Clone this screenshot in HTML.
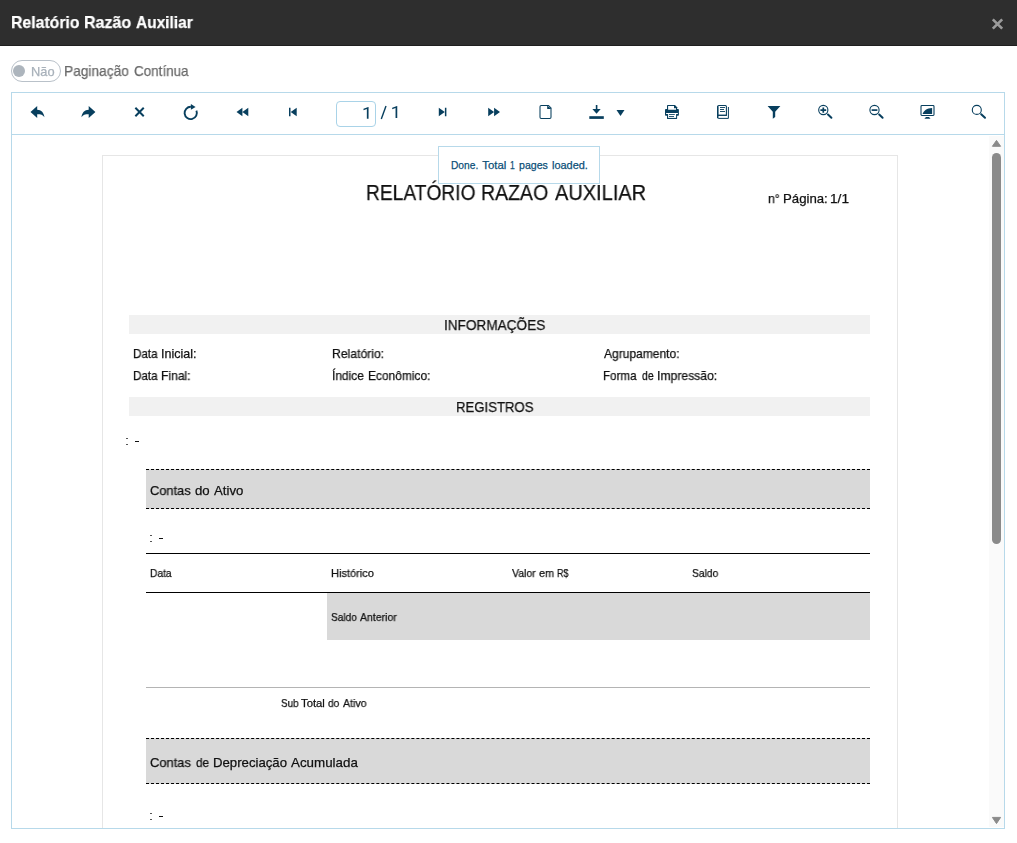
<!DOCTYPE html>
<html><head><meta charset="utf-8">
<style>
*{box-sizing:border-box;margin:0;padding:0}
html,body{width:1017px;height:843px;overflow:hidden;background:#fff;font-family:"Liberation Sans",sans-serif;}
body{position:relative}
.abs{position:absolute}
.t{position:absolute;white-space:nowrap;transform-origin:0 0;will-change:transform;-webkit-text-stroke:0.25px}
.t[id^=toast]{will-change:auto}
</style></head><body>
<div class="abs" style="left:0;top:0;width:1017px;height:46px;background:#2e2e2e;border-bottom:1px solid #1f1f1f"></div>
<svg class="abs" style="left:987px;top:14px" width="20" height="20" viewBox="987 14 20 20"><path d="M992.8 19.4 L1002.2 28.6 M1002.2 19.4 L992.8 28.6" stroke="#9b9b9b" stroke-width="2.7" fill="none"/></svg>
<div class="abs" style="left:11px;top:60px;width:50px;height:22px;border:1px solid #b9c1c9;border-radius:11px;background:#fff"></div>
<div class="abs" style="left:13.3px;top:65.2px;width:11.6px;height:11.6px;border-radius:6px;background:#adb5bd"></div>
<div class="abs" style="left:11px;top:92px;width:994px;height:43px;border:1px solid #b7d9ea;background:#fff"></div>
<div class="abs" style="left:11px;top:134px;width:994px;height:695px;border:1px solid #b7d9ea;background:#fff"></div>
<svg class="abs" style="left:0;top:92px" width="1017" height="43" viewBox="0 92 1017 43" fill="#083f5e" stroke="none">
<!-- back (reply) -->
<path d="M30.5 112 L37.2 106 L37.2 109.7 C41.3 109.9 44 112.6 44.4 117.2 C42.8 114.8 41 114.3 37.2 114.3 L37.2 117.9 Z"/>
<!-- forward -->
<path d="M95.4 112 L88.7 106 L88.7 109.7 C84.6 109.9 81.9 112.6 81.5 117.2 C83.1 114.8 84.9 114.3 88.7 114.3 L88.7 117.9 Z"/>
<!-- x -->
<path d="M135.35 107.8 L143.75 116.2 M143.75 107.8 L135.35 116.2" stroke="#083f5e" stroke-width="2" fill="none" stroke-linecap="butt"/>
<!-- refresh -->
<path d="M190.9 106.8 A6.15 6.15 0 1 0 196.4 110.55" stroke="#083f5e" stroke-width="1.9" fill="none"/>
<path d="M190.9 104.1 L195.6 106.9 L190.9 109.8 Z"/>
<!-- rewind -->
<path d="M236.5 112 L242.4 107.8 L242.4 116.2 Z M242.4 112 L248.3 107.8 L248.3 116.2 Z"/>
<!-- first -->
<path d="M289 107.8 H290.5 V116.2 H289 Z M290.7 112 L296.7 107.8 L296.7 116.2 Z"/>
<!-- last -->
<path d="M444.9 107.8 H446.4 V116.2 H444.9 Z M444.8 112 L438.8 107.8 L438.8 116.2 Z"/>
<!-- ffwd -->
<path d="M500 112 L494.1 107.8 L494.1 116.2 Z M494.1 112 L488.2 107.8 L488.2 116.2 Z"/>
<!-- file -->
<path d="M541.2 105.5 H548.5 L551 108 V117.2 Q551 118.4 549.8 118.4 H541.2 Q540 118.4 540 117.2 V106.7 Q540 105.5 541.2 105.5 Z" fill="none" stroke="#083f5e" stroke-width="1.05"/>
<path d="M547.2 105.5 L551.5 109 H547.2 Z"/>
<!-- download -->
<rect x="589.3" y="116.2" width="14.5" height="2.7"/>
<rect x="595.8" y="105" width="1.6" height="5"/>
<path d="M592.4 109 H600.7 L596.55 113.8 Z"/>
<path d="M616.5 110 H624.5 L620.5 115.9 Z"/>
<!-- printer -->
<rect x="665" y="109.1" width="13.9" height="6.7" rx="0.8"/>
<rect x="666.1" y="113" width="11.8" height="1" fill="#fff"/>
<rect x="667" y="114" width="10.1" height="4.9" rx="0.4"/>
<rect x="668.1" y="113" width="8" height="4.9" fill="#fff"/>
<rect x="669" y="114.1" width="5.8" height="0.85"/>
<rect x="669" y="116.1" width="5" height="0.85"/>
<path d="M667 110 V105.4 Q667 105 667.4 105 H675 L677.1 107.2 V110 Z"/>
<path d="M668.1 109.8 V106.1 H674 V108.2 H676 V109.8 Z" fill="#fff"/>
<!-- book -->
<path d="M718.8 105.55 H725.4 Q726.4 105.55 726.4 106.5 V115.3 H717.6 V106.8 Q717.6 105.55 718.8 105.55 Z" fill="none" stroke="#083f5e" stroke-width="1.1"/>
<path d="M717.75 106.2 V118" stroke="#083f5e" stroke-width="1.5" fill="none"/><rect x="717.5" y="114.8" width="9.4" height="1.05"/>
<path d="M717.5 115.3 V117.6 Q717.5 118.4 718.3 118.4 H728.4 V107" stroke="#083f5e" stroke-width="1" fill="none"/>
<rect x="720" y="107.1" width="5" height="0.9"/><rect x="720" y="109.1" width="4" height="0.9"/><rect x="720" y="111.1" width="5" height="0.9"/>
<!-- filter -->
<path d="M767.6 105.9 H780.4 L775.2 111.8 V116.9 L772.8 118.7 V111.8 Z"/>
<!-- zoom in -->
<circle cx="823.3" cy="110" r="4.6" fill="none" stroke="#083f5e" stroke-width="1.1"/>
<path d="M828 114.5 L831.4 117.7" stroke="#083f5e" stroke-width="2" fill="none" stroke-linecap="round"/>
<path d="M820.4 110.1 H826.2 M823.3 107.4 V112.8" stroke="#083f5e" stroke-width="1.7" fill="none"/>
<!-- zoom out -->
<circle cx="874.5" cy="110" r="4.6" fill="none" stroke="#083f5e" stroke-width="1.1"/>
<path d="M879.2 114.5 L882.6 117.7" stroke="#083f5e" stroke-width="2" fill="none" stroke-linecap="round"/>
<path d="M871.6 110.1 H877.4" stroke="#083f5e" stroke-width="1.7" fill="none"/>
<!-- monitor -->
<rect x="921" y="105.5" width="13" height="10" rx="0.9" fill="none" stroke="#083f5e" stroke-width="1.1"/>
<path d="M922.6 113.9 C923.6 110.8 927 108 932.1 108 V113.9 Z"/>
<path d="M924.4 118.7 L926 117 H929 L930.5 118.7 Z"/>
<!-- search -->
<circle cx="976.8" cy="109.9" r="4.5" fill="none" stroke="#083f5e" stroke-width="1.1"/>
<path d="M981.2 114.2 L985 117.8" stroke="#083f5e" stroke-width="2" fill="none" stroke-linecap="round"/>
</svg>
<div class="abs" style="left:336px;top:101px;width:40px;height:26px;border:1px solid #a9d3e8;border-radius:4px;background:#fff"></div>
<svg class="abs" style="left:356px;top:100px" width="50" height="26" viewBox="356 100 50 26" fill="#083f5e">
<path d="M368.55 107 V118.8 H366.85 V109.1 L363.5 110.35 V108.8 L368.25 107 Z"/>
<path d="M397.25 106 V117.9 H395.55 V108.1 L392.2 109.35 V107.8 L396.95 106 Z"/>
<path d="M381.3 119 L386 105.9" stroke="#083f5e" stroke-width="1.4" fill="none"/>
</svg>
<div class="abs" style="left:102px;top:155px;width:796px;height:673px;border:1px solid #e6e6e6;border-bottom:none;background:#fff"></div>
<div class="abs" style="left:129px;top:315px;width:741px;height:19px;background:#f1f1f1"></div>
<div class="abs" style="left:129px;top:397px;width:741px;height:19px;background:#f1f1f1"></div>
<div class="abs" style="left:126px;top:438px;width:2px;height:1px;background:#555"></div><div class="abs" style="left:126px;top:444px;width:2px;height:1px;background:#555"></div><div class="abs" style="left:135px;top:441px;width:4px;height:1px;background:#111"></div>
<div class="abs" style="left:146px;top:469px;width:724px;height:40px;background:#d9d9d9;border-top:1px dashed #000;border-bottom:1px dashed #000"></div>

<div class="abs" style="left:150px;top:535px;width:2px;height:1px;background:#555"></div><div class="abs" style="left:150px;top:541px;width:2px;height:1px;background:#555"></div><div class="abs" style="left:159px;top:538px;width:4px;height:1px;background:#111"></div>
<div class="abs" style="left:146px;top:553px;width:724px;height:1px;background:#000"></div>
<div class="abs" style="left:146px;top:592px;width:724px;height:1px;background:#000"></div>
<div class="abs" style="left:327px;top:593px;width:543px;height:47px;background:#d9d9d9"></div>
<div class="abs" style="left:146px;top:687px;width:724px;height:1px;background:#b4b4b4"></div>
<div class="abs" style="left:146px;top:738px;width:724px;height:46px;background:#d9d9d9;border-top:1px dashed #000;border-bottom:1px dashed #000"></div>

<div class="abs" style="left:150px;top:813px;width:2px;height:1px;background:#555"></div><div class="abs" style="left:150px;top:819px;width:2px;height:1px;background:#555"></div><div class="abs" style="left:159px;top:816px;width:4px;height:1px;background:#111"></div>
<div class="t" id="title0" style="left:11.39px;top:13.00px;font-size:17.0px;line-height:20px;transform:scaleX(0.9297);color:#fff;font-weight:bold;">Relatório</div>
<div class="t" id="title1" style="left:83.52px;top:13.00px;font-size:17.0px;line-height:20px;transform:scaleX(0.9412);color:#fff;font-weight:bold;">Razão</div>
<div class="t" id="title2" style="left:135.69px;top:13.00px;font-size:17.0px;line-height:20px;transform:scaleX(0.9104);color:#fff;font-weight:bold;">Auxiliar</div>
<div class="t" id="pag0" style="left:63.72px;top:61.00px;font-size:14.5px;line-height:20px;transform:scaleX(0.9464);color:#696969;">Paginação</div>
<div class="t" id="pag1" style="left:134.21px;top:61.00px;font-size:14.5px;line-height:20px;transform:scaleX(0.9262);color:#696969;">Contínua</div>
<div class="t" id="nao0" style="left:30.72px;top:62.00px;font-size:12.4px;line-height:20px;transform:scaleX(1.0343);color:#a8b1ba;">Não</div>
<div class="t" id="toast0" style="left:450.71px;top:155.00px;font-size:11.4px;line-height:20px;transform:scaleX(0.8961);color:#0b4f78;z-index:5;">Done.</div>
<div class="t" id="toast1" style="left:482.19px;top:155.00px;font-size:11.4px;line-height:20px;transform:scaleX(1.0000);color:#0b4f78;z-index:5;">Total</div>
<div class="t" id="toast2" style="left:510.00px;top:155.00px;font-size:11.4px;line-height:20px;transform:scaleX(0.7500);color:#0b4f78;z-index:5;">1</div>
<div class="t" id="toast3" style="left:518.50px;top:155.00px;font-size:11.4px;line-height:20px;transform:scaleX(0.9297);color:#0b4f78;z-index:5;">pages</div>
<div class="t" id="toast4" style="left:552.09px;top:155.00px;font-size:11.4px;line-height:20px;transform:scaleX(0.9611);color:#0b4f78;z-index:5;">loaded.</div>
<div class="t" id="rtitle0" style="left:366.10px;top:183.00px;font-size:21.8px;line-height:20px;transform:scaleX(0.8800);color:#111;">RELATÓRIO</div>
<div class="t" id="rtitle1" style="left:481.15px;top:183.00px;font-size:21.8px;line-height:20px;transform:scaleX(0.8944);color:#111;">RAZAO</div>
<div class="t" id="rtitle2" style="left:555.30px;top:183.00px;font-size:21.8px;line-height:20px;transform:scaleX(0.9180);color:#111;">AUXILIAR</div>
<div class="t" id="npag0" style="left:767.71px;top:189.00px;font-size:13.2px;line-height:20px;transform:scaleX(0.9327);color:#111;">n°</div>
<div class="t" id="npag1" style="left:782.87px;top:189.00px;font-size:13.2px;line-height:20px;transform:scaleX(1.0012);color:#111;">Página:</div>
<div class="t" id="npag2" style="left:829.72px;top:189.00px;font-size:13.2px;line-height:20px;transform:scaleX(1.0371);color:#111;">1/1</div>
<div class="t" id="info0" style="left:444.10px;top:315.00px;font-size:14.6px;line-height:20px;transform:scaleX(0.9319);color:#111;">INFORMAÇÕES</div>
<div class="t" id="di0" style="left:133.10px;top:344.00px;font-size:12.4px;line-height:20px;transform:scaleX(0.9383);color:#111;">Data</div>
<div class="t" id="di1" style="left:161.16px;top:344.00px;font-size:12.4px;line-height:20px;transform:scaleX(1.0086);color:#111;">Inicial:</div>
<div class="t" id="df0" style="left:133.10px;top:366.00px;font-size:12.4px;line-height:20px;transform:scaleX(0.9383);color:#111;">Data</div>
<div class="t" id="df1" style="left:161.16px;top:366.00px;font-size:12.4px;line-height:20px;transform:scaleX(0.9781);color:#111;">Final:</div>
<div class="t" id="rel0" style="left:332.10px;top:344.00px;font-size:12.4px;line-height:20px;transform:scaleX(0.9841);color:#111;">Relatório:</div>
<div class="t" id="ind0" style="left:332.10px;top:366.00px;font-size:12.4px;line-height:20px;transform:scaleX(0.9610);color:#111;">Índice</div>
<div class="t" id="ind1" style="left:368.28px;top:366.00px;font-size:12.4px;line-height:20px;transform:scaleX(0.9630);color:#111;">Econômico:</div>
<div class="t" id="agr0" style="left:603.89px;top:344.00px;font-size:12.4px;line-height:20px;transform:scaleX(0.9697);color:#111;">Agrupamento:</div>
<div class="t" id="forma0" style="left:602.90px;top:366.00px;font-size:12.4px;line-height:20px;transform:scaleX(0.9360);color:#111;">Forma</div>
<div class="t" id="forma1" style="left:642.30px;top:366.00px;font-size:12.4px;line-height:20px;transform:scaleX(0.8412);color:#111;">de</div>
<div class="t" id="forma2" style="left:657.29px;top:366.00px;font-size:12.4px;line-height:20px;transform:scaleX(0.9832);color:#111;">Impressão:</div>
<div class="t" id="reg0" style="left:456.15px;top:397.00px;font-size:14.6px;line-height:20px;transform:scaleX(0.9015);color:#111;">REGISTROS</div>
<div class="t" id="contas0" style="left:149.89px;top:481.00px;font-size:13.2px;line-height:20px;transform:scaleX(0.9735);color:#111;">Contas</div>
<div class="t" id="contas1" style="left:194.69px;top:481.00px;font-size:13.2px;line-height:20px;transform:scaleX(1.0000);color:#111;">do</div>
<div class="t" id="contas2" style="left:213.59px;top:481.00px;font-size:13.2px;line-height:20px;transform:scaleX(1.0000);color:#111;">Ativo</div>
<div class="t" id="data0" style="left:149.78px;top:563.00px;font-size:11.3px;line-height:20px;transform:scaleX(0.9050);color:#111;">Data</div>
<div class="t" id="hist0" style="left:330.71px;top:563.00px;font-size:11.3px;line-height:20px;transform:scaleX(0.9751);color:#111;">Histórico</div>
<div class="t" id="valor0" style="left:511.80px;top:563.00px;font-size:11.3px;line-height:20px;transform:scaleX(0.9269);color:#111;">Valor</div>
<div class="t" id="valor1" style="left:538.81px;top:563.00px;font-size:11.3px;line-height:20px;transform:scaleX(0.9645);color:#111;">em</div>
<div class="t" id="valor2" style="left:556.95px;top:563.00px;font-size:11.3px;line-height:20px;transform:scaleX(0.7890);color:#111;">R$</div>
<div class="t" id="saldo0" style="left:691.78px;top:563.00px;font-size:11.3px;line-height:20px;transform:scaleX(0.9120);color:#111;">Saldo</div>
<div class="t" id="sant0" style="left:330.71px;top:607.00px;font-size:11.3px;line-height:20px;transform:scaleX(0.8989);color:#111;">Saldo</div>
<div class="t" id="sant1" style="left:360.05px;top:607.00px;font-size:11.3px;line-height:20px;transform:scaleX(0.9302);color:#111;">Anterior</div>
<div class="t" id="sub0" style="left:281.00px;top:693.00px;font-size:11.3px;line-height:20px;transform:scaleX(0.8787);color:#111;">Sub</div>
<div class="t" id="sub1" style="left:300.80px;top:693.00px;font-size:11.3px;line-height:20px;transform:scaleX(1.0000);color:#111;">Total</div>
<div class="t" id="sub2" style="left:328.19px;top:693.00px;font-size:11.3px;line-height:20px;transform:scaleX(0.8962);color:#111;">do</div>
<div class="t" id="sub3" style="left:342.89px;top:693.00px;font-size:11.3px;line-height:20px;transform:scaleX(0.9424);color:#111;">Ativo</div>
<div class="t" id="cdep0" style="left:149.69px;top:753.00px;font-size:13.2px;line-height:20px;transform:scaleX(0.9786);color:#111;">Contas</div>
<div class="t" id="cdep1" style="left:195.50px;top:753.00px;font-size:13.2px;line-height:20px;transform:scaleX(0.8951);color:#111;">de</div>
<div class="t" id="cdep2" style="left:212.52px;top:753.00px;font-size:13.2px;line-height:20px;transform:scaleX(0.9973);color:#111;">Depreciação</div>
<div class="t" id="cdep3" style="left:291.02px;top:753.00px;font-size:13.2px;line-height:20px;transform:scaleX(1.0136);color:#111;">Acumulada</div>
<div class="abs" style="left:438px;top:146px;width:162px;height:38px;border:1px solid #b7d9ea;background:#fff;z-index:4" id="toastbox"></div>
<div class="abs" style="left:989px;top:136px;width:15px;height:691px;background:#fafafa"></div>
<svg class="abs" style="left:989px;top:136px" width="15" height="691" viewBox="989 136 15 691" fill="#8a8a8a"><path d="M996.5 140.4 L1000.6 146.3 H992.4 Z M996.5 823.6 L1000.6 817.4 H992.4 Z" stroke="#8a8a8a" stroke-width="1" stroke-linejoin="round"/><rect x="992" y="153" width="9" height="391" rx="4.5"/></svg>
</body></html>
